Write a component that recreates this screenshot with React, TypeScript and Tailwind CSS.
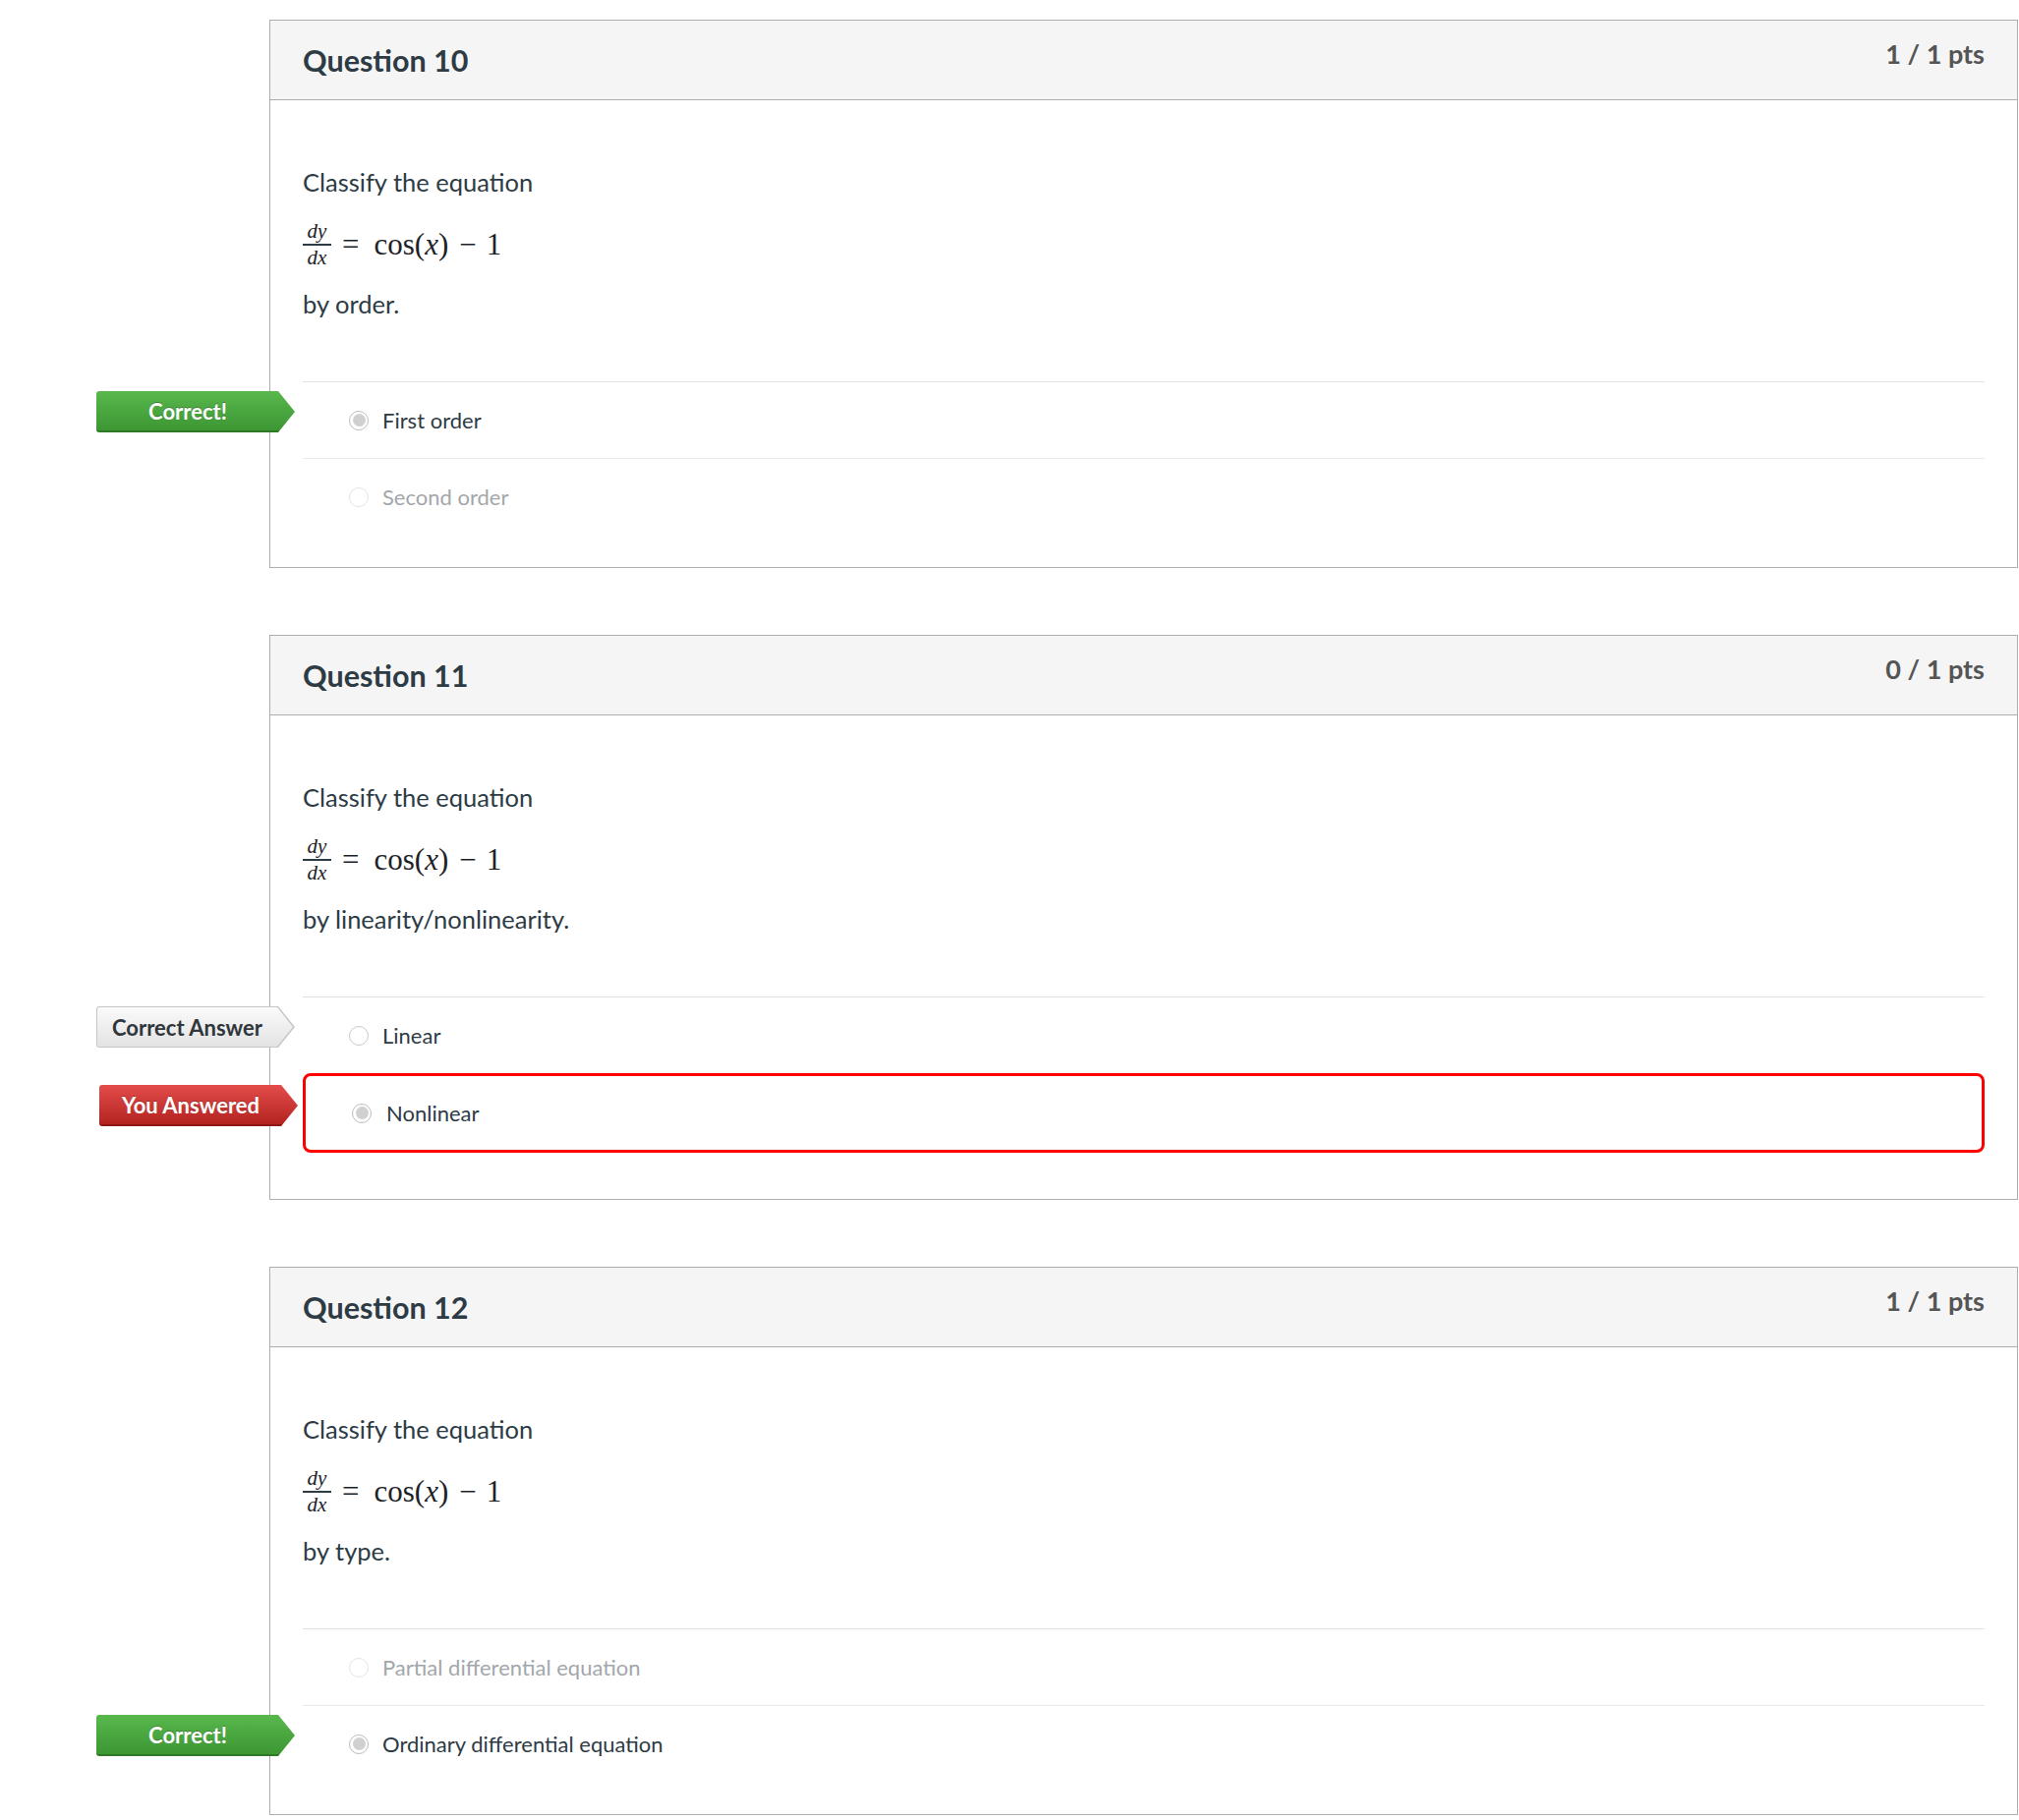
import React from 'react'

type Kind = 'chosen' | 'faded' | 'key' | 'wrong'
type Flag = 'correct' | 'key' | 'wrong'

type Answer = { text: string; kind: Kind; flag?: Flag }

type Question = {
  num: number
  pts: string
  tail: string
  answers: Answer[]
}

const questions: Question[] = [
  {
    num: 10,
    pts: '1 / 1 pts',
    tail: 'by order.',
    answers: [
      { text: 'First order', kind: 'chosen', flag: 'correct' },
      { text: 'Second order', kind: 'faded' },
    ],
  },
  {
    num: 11,
    pts: '0 / 1 pts',
    tail: 'by linearity/nonlinearity.',
    answers: [
      { text: 'Linear', kind: 'key', flag: 'key' },
      { text: 'Nonlinear', kind: 'wrong', flag: 'wrong' },
    ],
  },
  {
    num: 12,
    pts: '1 / 1 pts',
    tail: 'by type.',
    answers: [
      { text: 'Partial differential equation', kind: 'faded' },
      { text: 'Ordinary differential equation', kind: 'chosen', flag: 'correct' },
    ],
  },
]

function Equation() {
  return (
    <div className="flex items-center font-['Liberation_Serif','DejaVu_Serif',serif] text-[#1d2227] h-[44px]">
      <div className="flex flex-col items-center text-[21px] leading-[19px] italic">
        <span className="px-[2px]">dy</span>
        <span className="block w-[29px] h-[1.5px] bg-[#2d3b45] my-[3px]" />
        <span className="px-[2px]">dx</span>
      </div>
      <span className="text-[31px] ml-[11px]">=</span>
      <span className="text-[31px] ml-[15px]">cos(</span>
      <span className="text-[31px] italic">x</span>
      <span className="text-[31px]">)</span>
      <span className="text-[31px] ml-[11px]">−</span>
      <span className="text-[31px] ml-[10px]">1</span>
    </div>
  )
}

function Radio({ kind }: { kind: Kind }) {
  if (kind === 'chosen' || kind === 'wrong') {
    return (
      <span className="flex items-center justify-center w-[20px] h-[20px] rounded-full border border-[#bcbcbc] bg-white shrink-0">
        <span className="w-[13px] h-[13px] rounded-full bg-[#d0d0d0]" />
      </span>
    )
  }
  if (kind === 'key') {
    return <span className="w-[20px] h-[20px] rounded-full border border-[#c9c9c9] bg-white shrink-0" />
  }
  return <span className="w-[20px] h-[20px] rounded-full border border-[#e4e4e4] bg-white shrink-0" />
}

function AnswerFlag({ flag }: { flag: Flag }) {
  if (flag === 'key') {
    return (
      <div className="absolute top-[9px] left-[-210px] w-[202px] h-[42px] bg-[#c6c6c6] rounded-l-[3px] [clip-path:polygon(0_0,calc(100%_-_17px)_0,100%_50%,calc(100%_-_17px)_100%,0_100%)]">
        <div className="absolute inset-[1px] right-[2px] flex items-center justify-center pr-[16px] bg-linear-to-b from-[#fafafa] to-[#e3e3e3] rounded-l-[2px] [clip-path:polygon(0_0,calc(100%_-_16px)_0,100%_50%,calc(100%_-_16px)_100%,0_100%)]">
          <span className="text-[22px] font-bold text-[#2f363c]">Correct Answer</span>
        </div>
      </div>
    )
  }
  const colours =
    flag === 'correct'
      ? 'from-[#58b84d] to-[#3d9633] border-b-[2px] border-[#2f7a27] text-white'
      : 'from-[#e44c4a] to-[#b3221f] border-b-[2px] border-[#8f1715] text-white'
  return (
    <div
      className={`absolute top-[9px] left-[-210px] w-[202px] h-[42px] flex items-center justify-center pr-[16px] rounded-l-[3px] bg-linear-to-b ${colours} [clip-path:polygon(0_0,calc(100%_-_17px)_0,100%_50%,calc(100%_-_17px)_100%,0_100%)] [text-shadow:0_-1px_0_rgba(0,0,0,0.25)]`}
    >
      <span className="text-[22px] font-bold">{flag === 'correct' ? 'Correct!' : 'You Answered'}</span>
    </div>
  )
}

function AnswerRow({ answer, first }: { answer: Answer; first: boolean }) {
  const textColour = answer.kind === 'faded' ? 'text-[#a3a7ab]' : 'text-[#2d3b45]'
  if (answer.kind === 'wrong') {
    return (
      <div className="relative flex items-center h-[81px] border-[3px] border-[#ff0000] rounded-[8px] pl-[47px] mb-[14px]">
        {answer.flag && <AnswerFlag flag={answer.flag} />}
        <Radio kind={answer.kind} />
        <span className={`ml-[15px] text-[22px] ${textColour}`}>{answer.text}</span>
      </div>
    )
  }
  return (
    <div className={`relative flex items-center h-[78px] pl-[47px] ${first ? 'border-t border-[#e2e2e2]' : 'border-t border-[#e9e9e9]'}`}>
      {answer.flag && <AnswerFlag flag={answer.flag} />}
      <Radio kind={answer.kind} />
      <span className={`ml-[14px] text-[22px] ${textColour}`}>{answer.text}</span>
    </div>
  )
}

function QuestionCard({ q }: { q: Question }) {
  return (
    <div className="w-[1779px] border border-[#adadad] bg-white">
      <div className="flex justify-between items-start h-[81px] bg-[#f5f5f5] border-b border-[#adadad] pl-[33px] pr-[33px]">
        <h2 className="text-[30.5px] leading-[80px] font-bold text-[#2d3b45]">Question {q.num}</h2>
        <span className="pt-[18px] text-[27px] leading-[32px] font-bold text-[#555555]">{q.pts}</span>
      </div>
      <div className="pl-[33px] pr-[33px] pt-[63px] pb-[33px]">
        <p className="text-[25.5px] leading-[40px] text-[#2d3b45]">Classify the equation</p>
        <div className="mt-[22px]">
          <Equation />
        </div>
        <p className="mt-[18px] text-[25.5px] leading-[40px] text-[#2d3b45]">{q.tail}</p>
        <div className="mt-[59px]">
          {q.answers.map((a, i) => (
            <AnswerRow key={a.text} answer={a} first={i === 0} />
          ))}
        </div>
      </div>
    </div>
  )
}

export default function App() {
  return (
    <div className="min-h-screen w-[2054px] bg-white font-['Lato','Noto_Sans',sans-serif] pl-[274px] pt-[20px] pb-[10px]">
      <div className="flex flex-col gap-[68px]">
        {questions.map(q => (
          <QuestionCard key={q.num} q={q} />
        ))}
      </div>
    </div>
  )
}
